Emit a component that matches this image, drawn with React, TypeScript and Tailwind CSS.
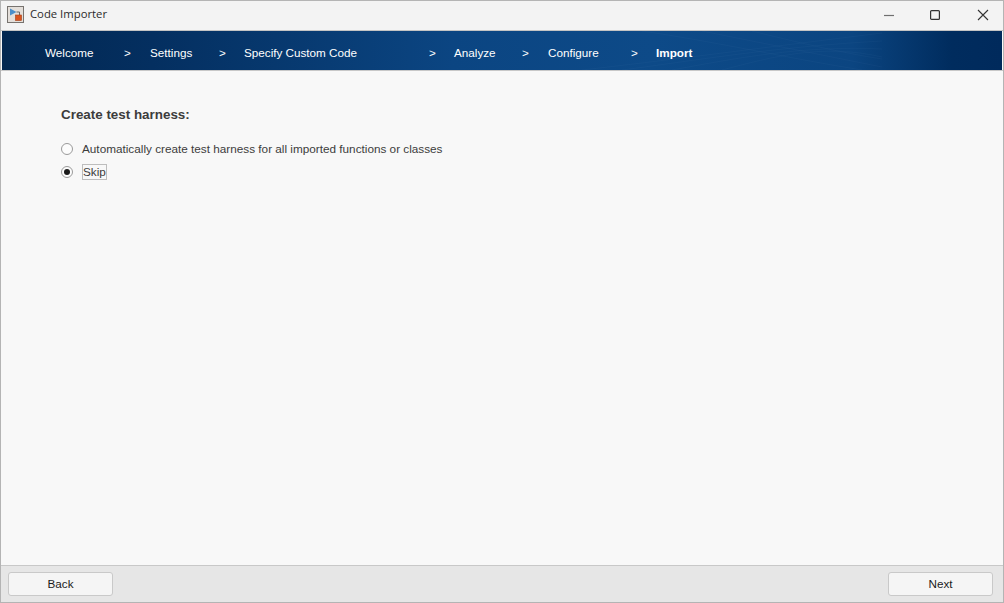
const sans = "font-['Liberation_Sans',Arial,sans-serif]";

// Wizard steps, width is the slot up to the next step
const steps = [
  { label: 'Welcome', width: 'w-[79px]', sep: 'w-[26px]' },
  { label: 'Settings', width: 'w-[69px]', sep: 'w-[25px]' },
  { label: 'Specify Custom Code', width: 'w-[185px]', sep: 'w-[25px]' },
  { label: 'Analyze', width: 'w-[68px]', sep: 'w-[26px]' },
  { label: 'Configure', width: 'w-[83px]', sep: 'w-[25px]' },
];

function AppIcon() {
  return (
    <svg width="17" height="17" viewBox="0 0 17 17">
      <rect x="0.5" y="0.5" width="16" height="16" fill="#e4dfda" stroke="#77736f" />
      <path d="M3 2.5 L9.5 6 L3 9.5 Z" fill="#4a8fca" />
      <path d="M9.5 6 H12.5 V9" fill="none" stroke="#666" strokeWidth="1" />
      <rect x="8.5" y="9" width="6" height="5.5" fill="#d9541e" stroke="#a33c14" strokeWidth="0.6" />
    </svg>
  );
}

function WindowButtons() {
  return (
    <div className="flex items-center pb-[2px]">
      <svg width="12" height="12" viewBox="0 0 12 12" className="mr-[34px]">
        <path d="M1 6.5 H11" stroke="#6f6f6f" strokeWidth="1.2" />
      </svg>
      <svg width="12" height="12" viewBox="0 0 12 12" className="mr-[36px]">
        <rect x="1.6" y="1.6" width="8.8" height="8.8" rx="1" fill="none" stroke="#333" strokeWidth="1.2" />
      </svg>
      <svg width="12" height="12" viewBox="0 0 12 12" className="mr-[14px]">
        <path d="M1 1 L11 11 M11 1 L1 11" stroke="#333" strokeWidth="1.1" />
      </svg>
    </div>
  );
}

function BannerWeave() {
  return (
    <svg className="absolute right-[120px] top-0 h-full w-[300px] opacity-10" viewBox="0 0 300 39" preserveAspectRatio="none">
      <g fill="none" stroke="#8fb6dc" strokeWidth="0.4">
        <path d="M0 39 C80 30 170 18 300 2" />
        <path d="M40 39 C110 30 190 16 300 10" />
        <path d="M90 39 C150 28 220 14 300 18" />
        <path d="M140 39 C190 26 240 12 300 26" />
        <path d="M120 0 C170 10 240 24 300 36" />
        <path d="M170 0 C210 10 260 22 300 28" />
        <path d="M60 0 C130 10 210 28 280 39" />
      </g>
    </svg>
  );
}

function Radio({ checked }: { checked?: boolean }) {
  return (
    <span className="flex h-[12px] w-[12px] items-center justify-center rounded-full border border-[#9a9a9a] bg-[#fcfcfc]">
      {checked && <span className="h-[6px] w-[6px] rounded-full bg-[#1a1a1a]" />}
    </span>
  );
}

function FooterButton({ label }: { label: string }) {
  return (
    <button className="h-[24px] w-[105px] rounded-[3px] border border-[#c9c9c9] bg-[#f5f5f5] text-[11.7px] text-[#1c1c1c]">
      {label}
    </button>
  );
}

export default function App() {
  return (
    <div className={`flex h-[603px] w-[1004px] flex-col overflow-hidden border border-[#b4b4b4] bg-[#f8f8f8] ${sans}`}>
      <div className="flex h-[29px] shrink-0 items-center justify-between bg-[#f3f3f3]">
        <div className="flex items-center pb-[2px] pl-[6px]">
          <AppIcon />
          <span className="ml-[6px] font-['Open_Sans',sans-serif] text-[11.3px] text-[#2b2b2b]">Code Importer</span>
        </div>
        <WindowButtons />
      </div>

      <div className="h-px shrink-0 bg-[#c4c4c4]" />
      <div className="relative mx-px flex h-[39px] shrink-0 items-center overflow-hidden bg-[linear-gradient(90deg,#022750_0%,#042f60_15%,#0b4582_45%,#0d4a88_65%,#0b4581_85%,#002c5e_95%,#002a5c_100%)] pl-[43px] pt-[4px] text-[11.7px] text-white">
        <BannerWeave />
        {steps.map((step) => (
          <div key={step.label} className="relative flex">
            <span className={step.width}>{step.label}</span>
            <span className={step.sep}>&gt;</span>
          </div>
        ))}
        <span className="relative font-bold">Import</span>
      </div>
      <div className="h-px shrink-0 bg-[#c8c8c8]" />

      <main className="flex-1 pl-[60px] pt-[35px] text-[#3c3c3c]">
        <h1 className="text-[13.4px] leading-[18px] font-bold">Create test harness:</h1>
        <div className="mt-[17px] flex flex-col gap-[7px] text-[11.75px]">
          <label className="flex h-[16px] items-center gap-[9px]">
            <Radio />
            <span>Automatically create test harness for all imported functions or classes</span>
          </label>
          <label className="flex h-[16px] items-center gap-[9px]">
            <Radio checked />
            <span className="border border-[#bdbdbd] leading-[14px]">Skip</span>
          </label>
        </div>
      </main>

      <div className="flex h-[37px] shrink-0 items-center justify-between border-t border-[#c8c8c8] bg-[#e6e6e6] pl-[7px] pr-[10px]">
        <FooterButton label="Back" />
        <FooterButton label="Next" />
      </div>
    </div>
  );
}
